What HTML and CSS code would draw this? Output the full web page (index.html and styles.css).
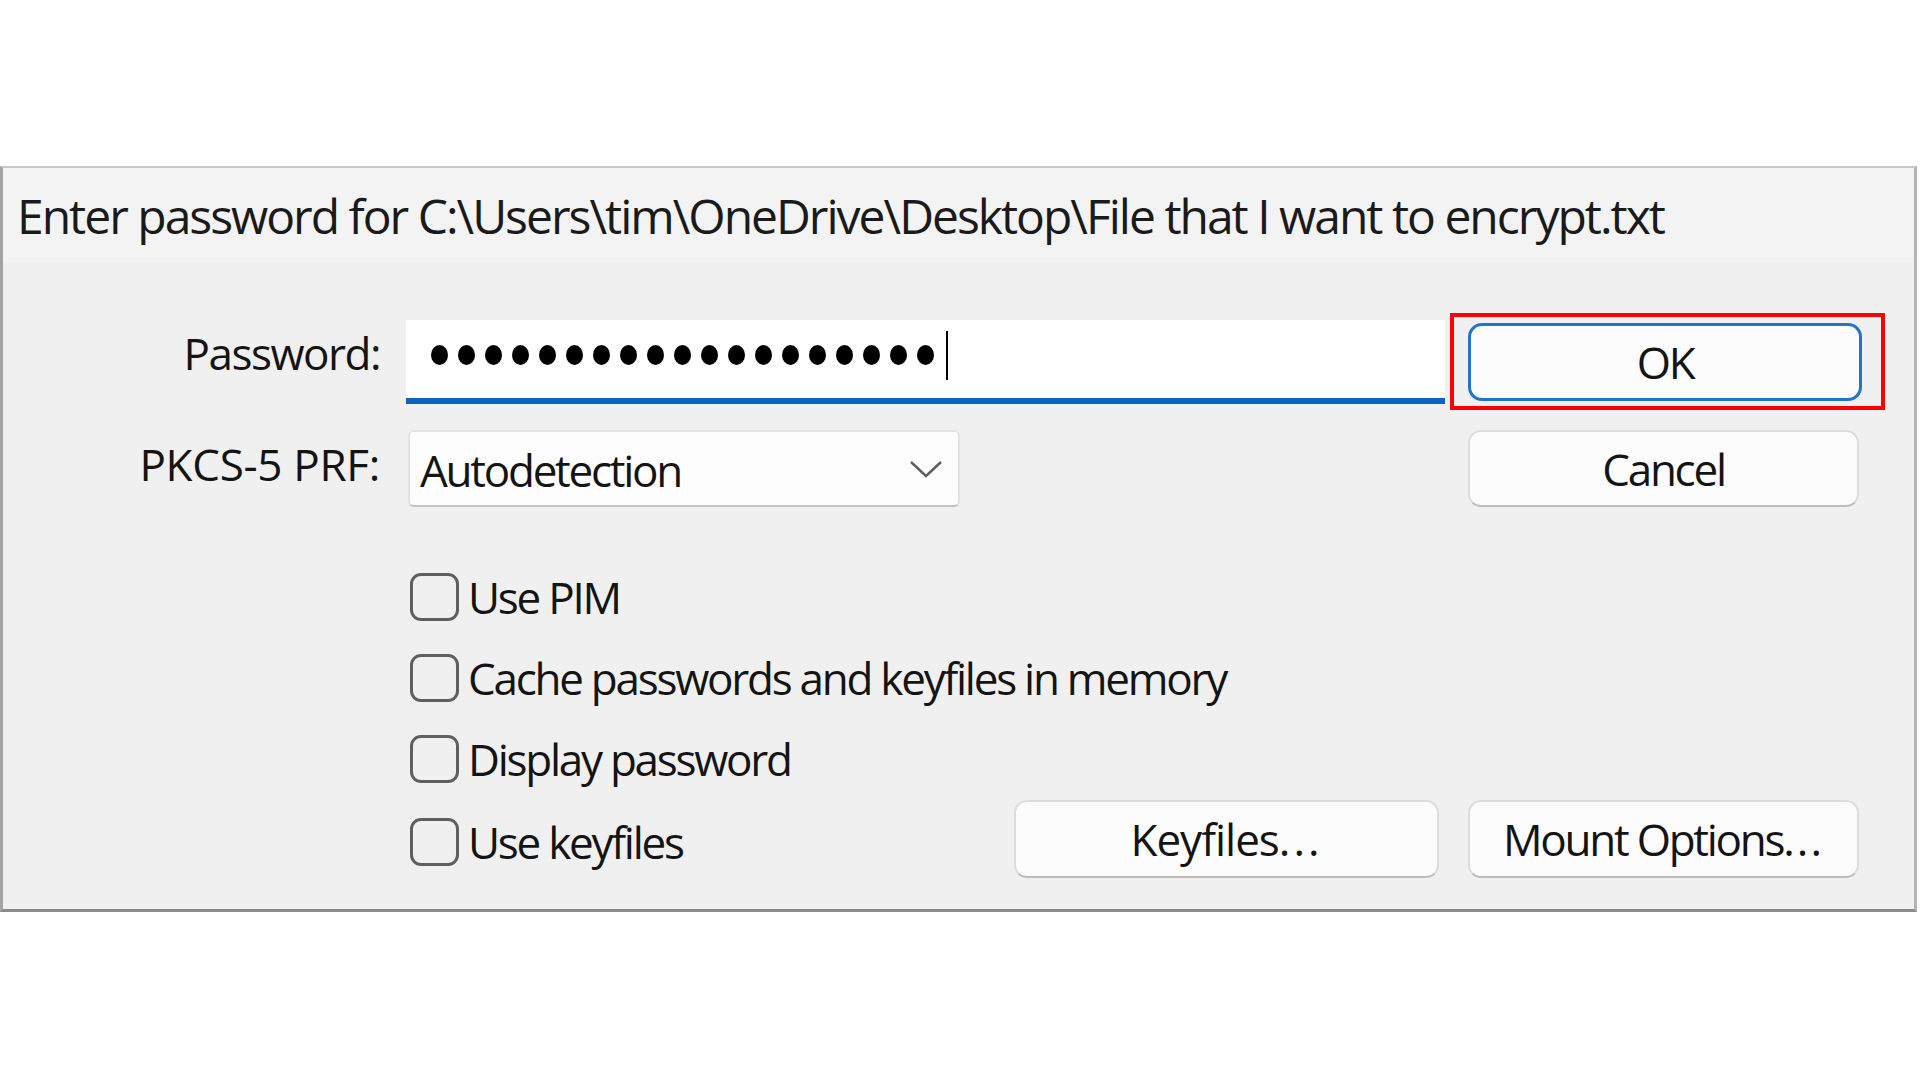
FILE: index.html
```html
<!DOCTYPE html>
<html lang="en">
<head>
<meta charset="utf-8">
<title>Enter password</title>
<link rel="stylesheet" href="styles.css">
</head>
<body>
<div class="dialog">
  <div class="dialog-title">Enter password for C:\Users\tim\OneDrive\Desktop\File that I want to encrypt.txt</div>
  <div class="dialog-body">
    <div class="row row-password">
      <label class="field-label label-password">Password:</label>
      <div class="field">
        <div class="password-input">
          <span class="dot"></span><span class="dot"></span><span class="dot"></span><span class="dot"></span><span class="dot"></span><span class="dot"></span><span class="dot"></span><span class="dot"></span><span class="dot"></span><span class="dot"></span><span class="dot"></span><span class="dot"></span><span class="dot"></span><span class="dot"></span><span class="dot"></span><span class="dot"></span><span class="dot"></span><span class="dot"></span><span class="dot"></span><span class="caret"></span>
        </div>
      </div>
      <div class="side">
        <button class="btn btn-default">OK</button>
        <span class="highlight"></span>
      </div>
    </div>
    <div class="row row-prf">
      <label class="field-label label-prf">PKCS-5 PRF:</label>
      <div class="field">
        <div class="combo">
          <span class="combo-text">Autodetection</span>
          <svg class="chevron" viewBox="0 0 34 18" width="34" height="18"><path d="M2 2 L17 16 L32 2" fill="none" stroke="#5e5e5e" stroke-width="2.4"/></svg>
        </div>
      </div>
      <div class="side">
        <button class="btn">Cancel</button>
      </div>
    </div>
    <div class="row row-check first-check">
      <div></div>
      <div class="field"><span class="checkbox"></span><span class="check-label">Use PIM</span></div>
      <div></div>
    </div>
    <div class="row row-check">
      <div></div>
      <div class="field"><span class="checkbox"></span><span class="check-label">Cache passwords and keyfiles in memory</span></div>
      <div></div>
    </div>
    <div class="row row-check">
      <div></div>
      <div class="field"><span class="checkbox"></span><span class="check-label">Display password</span></div>
      <div></div>
    </div>
    <div class="row row-last">
      <div></div>
      <div class="field field-split">
        <div class="check-item"><span class="checkbox"></span><span class="check-label">Use keyfiles</span></div>
        <button class="btn btn-keyfiles">Keyfiles<span class="ellipsis">...</span></button>
      </div>
      <div class="side">
        <button class="btn">Mount Options<span class="ellipsis">...</span></button>
      </div>
    </div>
  </div>
</div>
</body>
</html>
```
FILE: styles.css
```css
html, body {
  margin: 0;
  padding: 0;
  background: #ffffff;
}

body {
  font-family: "Open Sans", "Noto Sans", sans-serif;
  color: #141414;
}

.dialog {
  box-sizing: border-box;
  width: 1917px;
  margin-top: 166px;
  background: #f0f0f0;
  border-top: 2px solid #c8c8c8;
  border-left: 3px solid #a4a4a4;
  border-right: 3px solid #b4b4b4;
  border-bottom: 3px solid #8a8a8a;
}

.dialog-title {
  height: 95px;
  display: flex;
  align-items: center;
  padding-left: 14px;
  background: #f3f3f3;
  font-size: 48px;
  line-height: 48px;
  letter-spacing: -2px;
  white-space: nowrap;
  color: #1a1a1a;
}

.dialog-body {
  padding-top: 57px;
  padding-bottom: 31px;
  display: flex;
  flex-direction: column;
}

.row {
  display: grid;
  grid-template-columns: 403px 1062px 394px;
  align-items: center;
  font-size: 44px;
  line-height: 44px;
  letter-spacing: -2.25px;
}

.row-password { height: 84px; }
.row-prf { height: 77px; margin-top: 26px; }
.row-check { height: 48px; margin-top: 33px; }
.row-check.first-check { margin-top: 66px; }
.row-last { height: 78px; margin-top: 17px; }

.field-label {
  text-align: right;
  padding-right: 26px;
  white-space: nowrap;
}

.label-password {
  align-self: start;
  margin-top: 11px;
  letter-spacing: -1.5px;
}

.label-prf {
  margin-bottom: 10px;
  letter-spacing: -0.3px;
}

.field {
  display: flex;
  align-items: center;
  height: 100%;
}

.password-input {
  box-sizing: border-box;
  width: 1039px;
  height: 84px;
  background: #ffffff;
  border-bottom: 6px solid #0a64c0;
  padding-left: 25px;
  padding-bottom: 8px;
  display: flex;
  align-items: center;
  gap: 10px;
}

.dot {
  width: 17px;
  height: 20px;
  border-radius: 50%;
  background: #000000;
}

.caret {
  width: 2px;
  height: 49px;
  background: #000000;
  margin-left: 2px;
}

.side {
  position: relative;
  display: flex;
  align-items: center;
  height: 100%;
}

.btn {
  box-sizing: border-box;
  width: 391px;
  height: 77px;
  padding: 0;
  margin: 0;
  font-family: inherit;
  font-size: 44px;
  line-height: 44px;
  letter-spacing: -2.25px;
  color: #141414;
  background: #fcfcfc;
  border: 2px solid #dcdcdc;
  border-bottom-color: #bdbdbd;
  border-radius: 13px;
}

.ellipsis {
  letter-spacing: 2px;
}

.btn-default {
  width: 394px;
  height: 78px;
  border: 3px solid #1f74cc;
  border-radius: 14px;
}

.highlight {
  position: absolute;
  left: -18px;
  top: -7px;
  width: 427px;
  height: 89px;
  border: 4px solid #ff0000;
  pointer-events: none;
}

.combo {
  box-sizing: border-box;
  width: 552px;
  height: 77px;
  margin-left: 2px;
  background: #fdfdfd;
  border: 2px solid #e2e2e2;
  border-bottom-color: #c4c4c4;
  border-radius: 6px;
  display: flex;
  align-items: center;
  justify-content: space-between;
  padding-left: 10px;
  padding-right: 15px;
}

.combo-text {
  padding-top: 3px;
}

.chevron {
  display: block;
}

.checkbox {
  box-sizing: border-box;
  width: 49px;
  height: 48px;
  margin-left: 4px;
  border: 3px solid #5f5f5f;
  border-radius: 11px;
  flex: none;
}

.check-label {
  margin-left: 9px;
  white-space: nowrap;
}

.field-split {
  justify-content: space-between;
}

.check-item {
  display: flex;
  align-items: center;
  margin-top: 6px;
}

.btn-keyfiles {
  width: 425px;
  height: 78px;
  margin-right: 29px;
  letter-spacing: -1px;
}

.btn-keyfiles .ellipsis {
  letter-spacing: 3px;
}

.row-last .btn {
  height: 78px;
}
```
